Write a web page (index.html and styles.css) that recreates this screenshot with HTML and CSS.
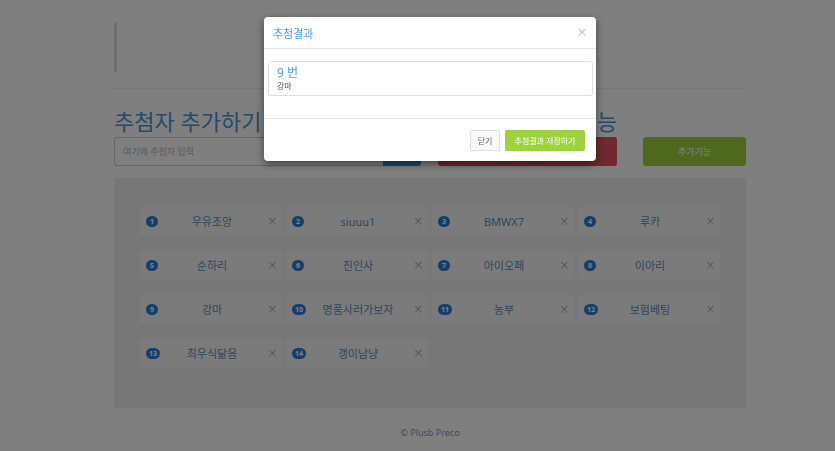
FILE: index.html
```html
<!DOCTYPE html>
<html lang="ko">
<head>
    <meta charset="UTF-8">
    <meta name="viewport" content="width=device-width, initial-scale=1.0">
    <title>추첨기</title>
    <link rel="stylesheet" href="styles.css">
</head>
<body>
    <div class="container">
        <blockquote class="intro"></blockquote>
        <hr class="divider">

        <h2 class="title">추첨자 추가하기 | 랜덤 추첨하기 추첨자 관리&nbsp; 부가기능</h2>

        <div class="controls">
            <div class="input-group">
                <input type="text" class="name-input" placeholder="여기에 추첨자 입력">
                <button class="btn btn-add">추가</button>
            </div>
            <button class="btn btn-draw">추첨하기</button>
            <button class="btn btn-extra">추가기능</button>
        </div>

        <div class="well">
            <div class="people">
                <div class="person"><span class="badge">1</span><span class="name">우유조앙</span><span class="remove">&times;</span></div>
                <div class="person"><span class="badge">2</span><span class="name">siuuu1</span><span class="remove">&times;</span></div>
                <div class="person"><span class="badge">3</span><span class="name">BMWX7</span><span class="remove">&times;</span></div>
                <div class="person"><span class="badge">4</span><span class="name">루카</span><span class="remove">&times;</span></div>
                <div class="person"><span class="badge">5</span><span class="name">순하리</span><span class="remove">&times;</span></div>
                <div class="person"><span class="badge">6</span><span class="name">진인사</span><span class="remove">&times;</span></div>
                <div class="person"><span class="badge">7</span><span class="name">아이오페</span><span class="remove">&times;</span></div>
                <div class="person"><span class="badge">8</span><span class="name">이아리</span><span class="remove">&times;</span></div>
                <div class="person"><span class="badge">9</span><span class="name">강마</span><span class="remove">&times;</span></div>
                <div class="person"><span class="badge">10</span><span class="name">명품사러가보자</span><span class="remove">&times;</span></div>
                <div class="person"><span class="badge">11</span><span class="name">농부</span><span class="remove">&times;</span></div>
                <div class="person"><span class="badge">12</span><span class="name">보험베팅</span><span class="remove">&times;</span></div>
                <div class="person"><span class="badge">13</span><span class="name">최우식닮음</span><span class="remove">&times;</span></div>
                <div class="person"><span class="badge">14</span><span class="name">갱이남냥</span><span class="remove">&times;</span></div>
            </div>
        </div>

        <footer class="footer">&copy; Plusb Preco</footer>
    </div>

    <div class="backdrop">
        <div class="modal">
            <div class="modal-header">
                <h4 class="modal-title">추첨결과</h4>
                <span class="close">&times;</span>
            </div>
            <div class="modal-body">
                <div class="result">
                    <div class="result-no">9 번</div>
                    <div class="result-name">강마</div>
                </div>
            </div>
            <div class="modal-footer">
                <button class="btn btn-close">닫기</button>
                <button class="btn btn-save">추첨결과 저장하기</button>
            </div>
        </div>
    </div>
</body>
</html>
```

FILE: styles.css
```css
body {
    margin: 0;
    background: #fff;
    font-family: "Noto Sans", "Noto Sans CJK KR", sans-serif;
    color: #333;
}
.container {
    width: 632px;
    margin-left: 114px;
    padding-top: 22px;
}
.intro {
    margin: 0;
    height: 50px;
    border-left: 3px solid #dcdcdc;
}
.divider {
    margin: 16px 0 0;
    border: none;
    border-top: 1px solid #eee;
}
.title {
    margin: 19px 0 3px;
    font-size: 22px;
    font-weight: 400;
    line-height: 26px;
    color: #4a94d2;
    white-space: nowrap;
}
.controls {
    display: flex;
    align-items: center;
    height: 29px;
}
.input-group {
    display: flex;
    height: 29px;
}
.name-input {
    width: 269px;
    box-sizing: border-box;
    border: 1px solid #ccc;
    border-right: none;
    border-radius: 3px 0 0 3px;
    padding: 0 8px;
    font-family: inherit;
    font-size: 9px;
    outline: none;
}
.name-input::placeholder {
    color: #b5b5b5;
}
.btn {
    border: none;
    font-family: inherit;
    cursor: pointer;
}
.btn-add {
    width: 38px;
    background: #3a8fd0;
    color: #fff;
    border-radius: 0 3px 3px 0;
    font-size: 9px;
}
.btn-draw {
    width: 179px;
    height: 29px;
    margin-left: 17px;
    background: #e0525b;
    color: #fff;
    border-radius: 3px;
    font-size: 9px;
}
.btn-extra {
    width: 103px;
    height: 29px;
    margin-left: 26px;
    background: #9dd33a;
    color: #fff;
    border-radius: 3px;
    font-size: 9px;
}
.well {
    margin-top: 12px;
    background: #efefef;
    padding: 28px 25px 40px;
}
.people {
    display: grid;
    grid-template-columns: repeat(4, 144px);
    column-gap: 2px;
    row-gap: 14px;
}
.person {
    display: grid;
    grid-template-columns: 20px 1fr 20px;
    align-items: center;
    height: 30px;
    box-sizing: border-box;
    padding: 0 4px 0 6px;
    background: #f6f6f6;
    border: 1px solid #f0f0f0;
}
.badge {
    justify-self: start;
    min-width: 12px;
    height: 11px;
    box-sizing: border-box;
    padding: 0 3px;
    border-radius: 6px;
    background: #2a7fd4;
    color: #fff;
    font-size: 7px;
    font-weight: 700;
    line-height: 11px;
    text-align: center;
}
.name {
    text-align: center;
    font-size: 11px;
    color: #5a8fc0;
    white-space: nowrap;
}
.remove {
    justify-self: end;
    margin-right: 1px;
    font-size: 16px;
    font-weight: 300;
    line-height: 1;
    color: #aaa;
}
.footer {
    margin-top: 18px;
    text-align: center;
    font-size: 9px;
    color: #6b9bd0;
}
.backdrop {
    position: fixed;
    inset: 0;
    background: rgba(0, 0, 0, 0.5);
}
.modal {
    width: 332px;
    margin: 17px 0 0 264px;
    background: #fff;
    border-radius: 4px;
    box-shadow: 0 3px 9px rgba(0, 0, 0, 0.5);
}
.modal-header {
    display: flex;
    justify-content: space-between;
    align-items: center;
    height: 31px;
    padding: 0 9px;
    border-bottom: 1px solid #e5e5e5;
}
.modal-title {
    margin: 0;
    font-size: 11px;
    font-weight: 400;
    color: #4aa3df;
}
.close {
    font-size: 17px;
    color: #c8c8c8;
    line-height: 1;
    margin-top: -2px;
}
.modal-body {
    padding: 12px 3px 22px 4px;
}
.result {
    height: 35px;
    box-sizing: border-box;
    padding: 3px 8px;
    border: 1px solid #ddd;
    border-radius: 3px;
}
.result-no {
    font-size: 12px;
    line-height: 15px;
    color: #4aa3df;
}
.result-name {
    font-size: 8px;
    line-height: 11px;
    color: #555;
}
.modal-footer {
    display: flex;
    justify-content: flex-end;
    gap: 5px;
    padding: 11px 11px 10px;
    border-top: 1px solid #e5e5e5;
}
.btn-close {
    width: 30px;
    height: 21px;
    background: #f8f8f8;
    border: 1px solid #ddd;
    border-radius: 2px;
    color: #666;
    font-size: 8px;
}
.btn-save {
    width: 80px;
    height: 21px;
    background: #9dd33a;
    border-radius: 2px;
    color: #fff;
    font-size: 8px;
}
```
